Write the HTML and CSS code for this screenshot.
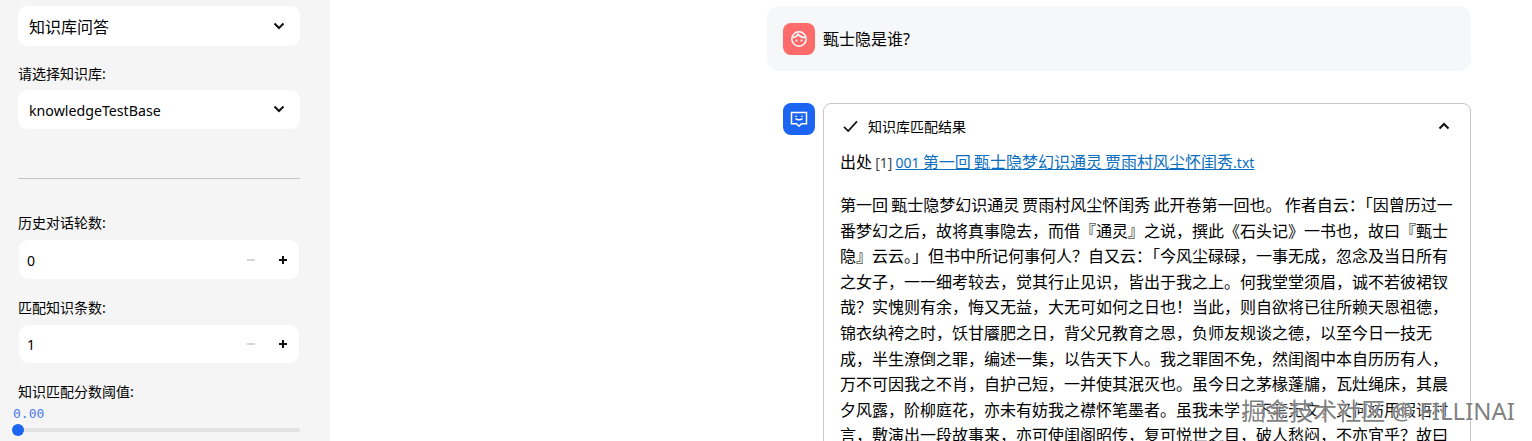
FILE: index.html
```html
<!DOCTYPE html>
<html lang="zh-CN">
<head>
    <meta charset="UTF-8">
    <meta name="viewport" content="width=device-width, initial-scale=1.0">
    <title>知识库问答</title>
    <link rel="stylesheet" href="styles.css">
</head>
<body>

    <aside class="sidebar">
        <div class="select select-mode">
            <span>知识库问答</span>
            <svg class="chevron" viewBox="0 0 12 8"><path d="M1.5 1.5 6 6l4.500-4.500"/></svg>
        </div>

        <label class="field-label label-base">请选择知识库:</label>
        <div class="select select-base">
            <span>knowledgeTestBase</span>
            <svg class="chevron" viewBox="0 0 12 8"><path d="M1.5 1.5 6 6l4.500-4.500"/></svg>
        </div>

        <hr class="divider">

        <label class="field-label">历史对话轮数:</label>
        <div class="number">
            <span class="number-value">0</span>
            <span class="step step-minus"></span>
            <span class="step step-plus"></span>
        </div>

        <label class="field-label label-next">匹配知识条数:</label>
        <div class="number">
            <span class="number-value">1</span>
            <span class="step step-minus"></span>
            <span class="step step-plus"></span>
        </div>

        <label class="field-label label-next">知识匹配分数阈值:</label>
        <div class="slider-value">0.00</div>
        <div class="slider">
            <span class="slider-thumb"></span>
        </div>
    </aside>

    <main class="chat">
        <div class="message message-user">
            <span class="avatar avatar-user">
                <svg viewBox="0 0 18 18"><circle cx="9" cy="9" r="7.200"/><path d="M2.500 7.500C5 7.500 7 6.500 8 4c1.500 2.500 4 3.500 7.500 3.500"/><circle class="eye" cx="6.500" cy="10.500" r="1"/><circle class="eye" cx="11.500" cy="10.500" r="1"/></svg>
            </span>
            <p class="question">甄士隐是谁?</p>
        </div>

        <div class="message message-bot">
            <span class="avatar avatar-bot">
                <svg viewBox="0 0 18 18"><path d="M1.500 2.500h15v11.200h-5L9 16.200l-2.500-2.500h-5z"/><path d="M5.500 8.500c1.800 1.800 5.200 1.800 7 0"/><path class="dash" d="M6 5.800v1.200M12 5.800v1.200"/></svg>
            </span>
            <section class="expander">
                <header class="expander-head">
                    <svg class="check" viewBox="0 0 16 14"><path d="M1 7.500 5.500 12 15 1.500"/></svg>
                    <span class="expander-title">知识库匹配结果</span>
                    <svg class="chevron chevron-up" viewBox="0 0 12 8"><path d="M1.500 6.500 6 2l4.500 4.500"/></svg>
                </header>
                <div class="expander-body">
                    <p class="source">出处 <small>[1]</small> <a href="#"><span class="latin">001</span> 第一回 甄士隐梦幻识通灵 贾雨村风尘怀闺秀<span class="latin">.txt</span></a></p>
                    <p class="passage">第一回 甄士隐梦幻识通灵 贾雨村风尘怀闺秀 此开卷第一回也。 作者自云：「因曾历过一番梦幻之后，故将真事隐去，而借『通灵』之说，撰此《石头记》一书也，故曰『甄士隐』云云。」但书中所记何事何人？自又云：「今风尘碌碌，一事无成，忽念及当日所有之女子，一一细考较去，觉其行止见识，皆出于我之上。何我堂堂须眉，诚不若彼裙钗哉？实愧则有余，悔又无益，大无可如何之日也！当此，则自欲将已往所赖天恩祖德，锦衣纨袴之时，饫甘餍肥之日，背父兄教育之恩，负师友规谈之德，以至今日一技无成，半生潦倒之罪，编述一集，以告天下人。我之罪固不免，然闺阁中本自历历有人，万不可因我之不肖，自护己短，一并使其泯灭也。虽今日之茅椽蓬牖，瓦灶绳床，其晨夕风露，阶柳庭花，亦未有妨我之襟怀笔墨者。虽我未学，下笔无文，又何妨用假语村言，敷演出一段故事来，亦可使闺阁昭传，复可悦世之目，破人愁闷，不亦宜乎？故曰</p>
                </div>
            </section>
        </div>
    </main>

    <div class="watermark">掘金技术社区 @ FILLINAI</div>

</body>
</html>
```

FILE: styles.css
```css
html, body {
    height: 100%;
}
body {
    display: flex;
    margin: 0;
    height: 441px;
    overflow: hidden;
    background: #fff;
    color: #000;
    font-family: "Noto Sans", "Noto Sans CJK SC", sans-serif;
}

/* sidebar */
.sidebar {
    flex: none;
    box-sizing: border-box;
    width: 330px;
    height: 441px;
    padding: 6px 30px 0 18px;
    background: #f5f5f5;
}
.select {
    display: flex;
    align-items: center;
    justify-content: space-between;
    box-sizing: border-box;
    height: 40px;
    padding: 0 15px 0 11px;
    background: #fff;
    border-radius: 9px;
}
.select-mode {
    font-size: 16px;
    padding-bottom: 1px;
}
.select-base {
    height: 39px;
    margin-top: 6px;
    padding-top: 2px;
    font-size: 14.200px;
}
.select-base .chevron {
    margin-top: -3px;
}
.chevron {
    width: 12px;
    height: 8px;
    fill: none;
    stroke: #111;
    stroke-width: 2;
}
.field-label {
    display: block;
    height: 20px;
    font-size: 14px;
    line-height: 20px;
}
.label-base {
    margin-top: 18px;
}
.label-next {
    margin-top: 19px;
}
.divider {
    height: 1px;
    margin: 49px 0 34px;
    border: 0;
    background: #c4c4c4;
}
.number {
    display: flex;
    align-items: center;
    box-sizing: border-box;
    height: 39px;
    margin: 7px 1px 0;
    padding-left: 8px;
    background: #fff;
    border-radius: 9px;
    font-size: 14px;
}
.number + .label-next + .number {
    height: 38px;
}
.number-value {
    flex: 1;
    padding-top: 1px;
}
.step {
    position: relative;
    width: 10px;
    height: 10px;
}
.step::before {
    content: "";
    position: absolute;
    left: 1px;
    top: 4px;
    width: 8px;
    height: 2px;
    background: #111;
}
.step-minus {
    margin-right: 22px;
}
.step-minus::before {
    background: #d6d6d6;
}
.step-plus {
    margin-right: 11px;
}
.step-plus::after {
    content: "";
    position: absolute;
    left: 4px;
    top: 1px;
    width: 2px;
    height: 8px;
    background: #111;
}
.slider-value {
    margin: 4px 0 0 -5px;
    color: #4a7bef;
    font-family: "DejaVu Sans Mono", monospace;
    font-size: 13px;
    line-height: 16px;
}
.slider {
    position: relative;
    height: 4px;
    margin-top: 6px;
    background: #e2e2e2;
    border-radius: 2px;
}
.slider-thumb {
    position: absolute;
    left: -6px;
    top: -4px;
    width: 12px;
    height: 12px;
    background: #1c64f2;
    border-radius: 50%;
}

/* chat */
.chat {
    flex: none;
    box-sizing: content-box;
    width: 704px;
    padding: 6px 0 0 437px;
}
.message {
    display: flex;
    gap: 8px;
}
.message-user {
    box-sizing: border-box;
    height: 65px;
    padding: 17px 16px;
    background: #f6f7f9;
    border-radius: 12px;
}
.message-bot {
    margin-top: 32px;
    padding-left: 16px;
}
.avatar {
    display: flex;
    flex: none;
    align-items: center;
    justify-content: center;
    width: 32px;
    height: 32px;
    border-radius: 8px;
}
.avatar svg {
    width: 18px;
    height: 18px;
    fill: none;
    stroke: #fff;
    stroke-width: 1.500;
}
.avatar-user {
    background: #ff6b6b;
}
.avatar-bot {
    background: #1c64f2;
}
.avatar .eye {
    fill: #fff;
    stroke: none;
}
.question {
    margin: 0;
    font-size: 16px;
    line-height: 32px;
}
.expander {
    flex: none;
    box-sizing: border-box;
    width: 648px;
    height: 400px;
    border: 1px solid #c8c8c8;
    border-radius: 8px;
}
.expander-head {
    display: flex;
    align-items: center;
    height: 44px;
    padding: 0 20px 0 19px;
}
.check {
    width: 15px;
    height: 13px;
    fill: none;
    stroke: #111;
    stroke-width: 1.800;
}
.expander-title {
    flex: 1;
    margin-left: 10px;
    font-size: 14px;
}
.expander-body {
    padding: 1px 16px 0 17px;
}
.source {
    margin: 0 0 0 -1px;
    font-size: 16px;
    line-height: 26px;
    word-spacing: -1px;
}
.source small {
    color: #444;
    font-size: 14px;
}
.source a {
    color: #0b6fc0;
}
.source .latin {
    font-size: 14px;
}
.passage {
    margin: 17px 0 0 -1px;
    font-size: 16px;
    line-height: 25.600px;
    word-spacing: -1px;
}

/* watermark over the page corner */
.watermark {
    position: absolute;
    right: 17px;
    top: 396px;
    color: rgba(105, 105, 105, 0.85);
    font-size: 24px;
    line-height: 30px;
    text-shadow: 0 0 1px #fff, 0 0 3px #fff;
    white-space: nowrap;
}
```
